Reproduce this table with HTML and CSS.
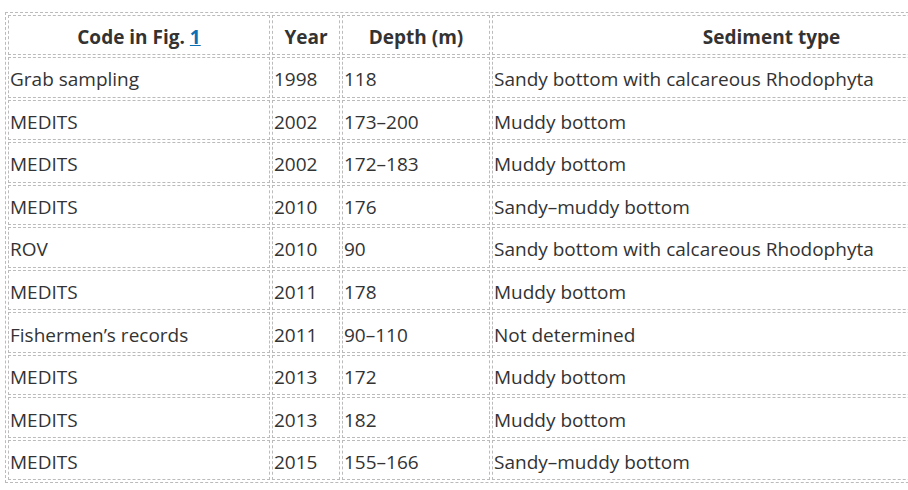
FILE: index.html
```html
<!DOCTYPE html>
<html>
<head>
<meta charset="utf-8">
<link rel="stylesheet" href="styles.css">
</head>
<body>
<table class="data">
<colgroup>
<col class="c1"><col class="c2"><col class="c3"><col class="c4">
</colgroup>
<thead>
<tr><th>Code in Fig. <a class="ref" href="#">1</a></th><th>Year</th><th>Depth (m)</th><th>Sediment type</th></tr>
</thead>
<tbody>
<tr><td>Grab sampling</td><td>1998</td><td>118</td><td>Sandy bottom with calcareous Rhodophyta</td></tr>
<tr><td>MEDITS</td><td>2002</td><td>173–200</td><td>Muddy bottom</td></tr>
<tr><td>MEDITS</td><td>2002</td><td>172–183</td><td>Muddy bottom</td></tr>
<tr><td>MEDITS</td><td>2010</td><td>176</td><td>Sandy–muddy bottom</td></tr>
<tr><td>ROV</td><td>2010</td><td>90</td><td>Sandy bottom with calcareous Rhodophyta</td></tr>
<tr><td>MEDITS</td><td>2011</td><td>178</td><td>Muddy bottom</td></tr>
<tr><td>Fishermen’s records</td><td>2011</td><td>90–110</td><td>Not determined</td></tr>
<tr><td>MEDITS</td><td>2013</td><td>172</td><td>Muddy bottom</td></tr>
<tr><td>MEDITS</td><td>2013</td><td>182</td><td>Muddy bottom</td></tr>
<tr><td>MEDITS</td><td>2015</td><td>155–166</td><td>Sandy–muddy bottom</td></tr>
</tbody>
</table>
</body>
</html>
```
FILE: styles.css
```css
html, body {
  background: #ffffff;
}
body {
  margin: 12px 0 0 5px;
  font-family: "Open Sans", "Noto Sans", sans-serif;
  font-size: 19px;
  color: #333333;
}
.data {
  border: 1px dashed #bbbbbb;
  border-spacing: 2px;
  table-layout: fixed;
  width: 1049px;
}
.c1 { width: 262px; }
.c2 { width: 68px; }
.c3 { width: 148px; }
.c4 { width: 559px; }
.data th,
.data td {
  border: 1px dashed #bbbbbb;
  line-height: 24px;
  padding: 9.3px 1px 5.25px;
  white-space: nowrap;
  overflow: hidden;
}
.data th {
  font-weight: 700;
  text-align: center;
  padding: 9px 1px 5px;
}
.data td {
  text-align: left;
}
.ref {
  color: #0a6fb5;
  text-decoration: underline;
}
```
